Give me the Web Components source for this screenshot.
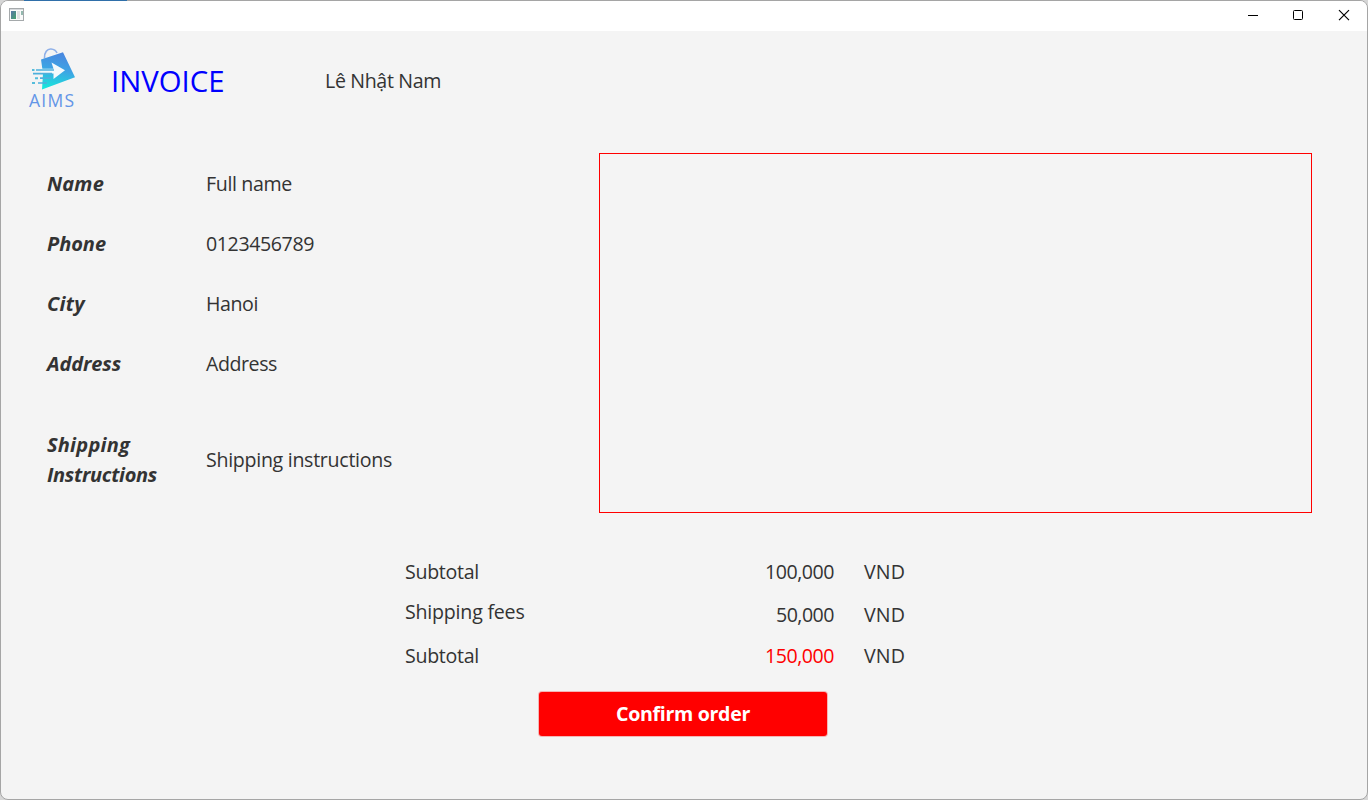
<!DOCTYPE html>
<html lang="en">
<head>
<meta charset="utf-8">
<title>Invoice</title>
<style>
html,body{margin:0;height:100%;overflow:hidden;background:#d6d6d6}
body{font-family:"Open Sans","Noto Sans",sans-serif;font-size:19.6px;font-weight:400;line-height:30px;color:#333}
</style>
</head>
<body>
<invoice-window>
  <title-bar slot="bar"></title-bar>
  <page-header slot="head"></page-header>
  <delivery-info slot="body"></delivery-info>
  <order-totals slot="body"></order-totals>
  <confirm-button slot="body"><fit-text width="134">Confirm order</fit-text></confirm-button>
</invoice-window>
<script>
function define(name, html, ready) {
  const tpl = document.createElement('template');
  tpl.innerHTML = html;
  customElements.define(name, class extends HTMLElement {
    constructor() {
      super();
      this.attachShadow({ mode: 'open' }).append(tpl.content.cloneNode(true));
    }
    connectedCallback() { if (ready) ready(this); }
  });
}

/* A single line of text whose tracking is adjusted to a given width. */
define('fit-text', `<style>:host{display:inline-block;white-space:nowrap}span{display:inline-block}</style><span><slot></slot></span>`, el => {
  const span = el.shadowRoot.querySelector('span');
  const want = parseFloat(el.getAttribute('width'));
  const fit = () => {
    const n = el.textContent.length;
    span.style.letterSpacing = '0px';
    const have = span.getBoundingClientRect().width;
    if (have) span.style.letterSpacing = ((want - have) / n).toFixed(3) + 'px';
  };
  fit();
  requestAnimationFrame(fit);
});

define('app-icon', `<style>:host{display:block;width:16px;height:14px}svg{display:block}</style>
<svg width="16" height="14" viewBox="0 0 16 14">
<defs><linearGradient id="g" x2="1" y2="1"><stop stop-color="#5875a8"/><stop offset="1" stop-color="#45a36c"/></linearGradient></defs>
<rect x=".5" y=".5" width="14" height="12" fill="#fafafa" stroke="#a5a9ab"/>
<rect x="1" y="1" width="13" height="1" fill="#d7dadd"/>
<rect x="2" y="3" width="5" height="8" fill="url(#g)"/>
<rect x="8" y="3" width="3" height="8" fill="#e0e2e3"/>
<rect x="12" y="3" width="2" height="4" fill="#93b8ae"/></svg>`);

define('title-bar', `<style>
:host{display:flex;height:30px;background:#fff;justify-content:space-between;align-items:center}
app-icon{margin:-2px 0 0 8px}
.c{display:flex;margin-right:-1px}.c svg{display:block;width:46px;height:30px;fill:none;stroke:#000;stroke-width:1}
.c svg:last-child path{stroke-width:1.2}
</style><app-icon></app-icon><div class="c">
<svg viewBox="0 0 46 30"><path d="M18 14.5h10"/></svg>
<svg viewBox="0 0 46 30"><rect x="17.5" y="9.5" width="9" height="9" rx="1"/></svg>
<svg viewBox="0 0 46 30"><path d="M17 9.2l10 10M27 9.2l-10 10"/></svg></div>`);

define('aims-logo', `<style>:host{display:block;width:56px;height:70px}svg{display:block}text{font:400 17.5px "Open Sans",sans-serif;fill:#6395e7}</style>
<svg width="56" height="70" viewBox="0 0 56 70">
<defs><linearGradient id="b" x1=".55" y1="0" x2=".35" y2="1"><stop stop-color="#4a86df"/><stop offset=".45" stop-color="#3ea3e4"/><stop offset="1" stop-color="#17e6dc"/></linearGradient></defs>
<path d="M20.5 16.5C20 10 23.5 6.7 27 7c3 .2 5 1.6 6 4" fill="none" stroke="#8fb0e8" stroke-width="1.7"/>
<path d="M17 17.5L39 10.2 51 35.3 18 47.5 19 31.5Z" fill="url(#b)"/>
<path d="M27.5 20.5L41 28.3 29.5 37 29.5 31.4 17 31.4 17 26.8 29.5 26.8Z" fill="#f4f9fc"/>
<path d="M12 28h18M9 31.7h19M16 36.2h11M14 41h9" stroke="#4eb0dc" stroke-width="1.7"/>
<path d="M8 28h2.5M11 36.2h3M8 41h3" stroke="#55bddb" stroke-width="1.9"/>
<text x="5" y="65" textLength="45" lengthAdjust="spacing">AIMS</text></svg>`);

define('page-header', `<style>
:host{display:flex;align-items:center;height:100px;padding-left:23px}
h1{margin:0 0 0 31px;width:214px;font-size:29.3px;font-weight:400;line-height:40px;color:#00f}
aims-logo{margin-top:-8px}
</style><aims-logo></aims-logo><h1><fit-text width="113.5">INVOICE</fit-text></h1><fit-text width="116">Lê Nhật Nam</fit-text>`);

define('info-row', `<style>
:host{display:grid;grid-template-columns:159px 1fr;align-items:center;height:60px}
:host([tall]){height:132px}
.l{font-size:20px;font-weight:700;font-style:italic}
</style><div class="l"><slot name="label"></slot></div><slot></slot>`);

define('item-panel', `<style>
:host{display:block;box-sizing:border-box;width:713px;height:360px;border:1px solid #f00}
</style><slot></slot>`);

define('delivery-info', `<style>
:host{display:flex;justify-content:space-between;padding:22px 55px 0 46px;height:372px}
.rows{width:500px;padding-top:1px}
</style><div class="rows">
<info-row><fit-text slot="label" width="57">Name</fit-text><fit-text width="86">Full name</fit-text></info-row>
<info-row><fit-text slot="label" width="59">Phone</fit-text><fit-text width="108">0123456789</fit-text></info-row>
<info-row><fit-text slot="label" width="38">City</fit-text><fit-text width="52">Hanoi</fit-text></info-row>
<info-row><fit-text slot="label" width="74">Address</fit-text><fit-text width="71">Address</fit-text></info-row>
<info-row tall><div slot="label"><fit-text width="83">Shipping</fit-text><br><fit-text width="110">Instructions</fit-text></div><fit-text width="186">Shipping instructions</fit-text></info-row>
</div><item-panel></item-panel>`);

define('total-row', `<style>
:host{display:grid;grid-template-columns:1fr auto 41px;column-gap:30px;align-items:start}
</style><slot name="label"></slot><slot></slot><fit-text width="41">VND</fit-text>`);

define('order-totals', `<style>
:host{display:block;width:500px;margin:32px 0 0 404px}
total-row{height:43px}total-row+total-row{height:41px}
.up{margin-top:-3px}.sum{color:#f00}
</style>
<total-row><fit-text slot="label" width="74">Subtotal</fit-text><fit-text width="69">100,000</fit-text></total-row>
<total-row><fit-text slot="label" class="up" width="119.5">Shipping fees</fit-text><fit-text width="58">50,000</fit-text></total-row>
<total-row><fit-text slot="label" width="74">Subtotal</fit-text><fit-text class="sum" width="69">150,000</fit-text></total-row>`);

define('confirm-button', `<style>
:host{display:block;margin:10px 0 0 538px}
button{display:flex;align-items:center;justify-content:center;width:288px;height:44px;padding:0;border:0;border-radius:3px;background:#f00;color:#fff;font:inherit;font-weight:700;box-shadow:0 0 0 1px #f4b5b5}
</style><button><slot></slot></button>`);

define('invoice-window', `<style>
:host{display:flex;flex-direction:column;box-sizing:border-box;width:1368px;height:800px;border:1px solid #a5a5a5;border-radius:8px;background:#f4f4f4;overflow:hidden}
:host::before{content:"";position:absolute;left:24px;top:0;width:103px;height:1px;background:#2f6fa9}
</style><slot name="bar"></slot><slot name="head"></slot><slot name="body"></slot>`);
</script>
</body>
</html>
